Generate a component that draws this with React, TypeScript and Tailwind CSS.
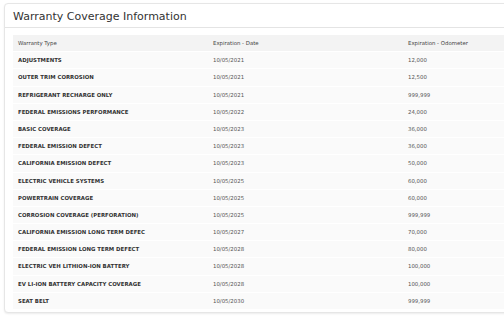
import React from 'react';

const rows: [string, string, string][] = [
  ['ADJUSTMENTS', '10/05/2021', '12,000'],
  ['OUTER TRIM CORROSION', '10/05/2021', '12,500'],
  ['REFRIGERANT RECHARGE ONLY', '10/05/2021', '999,999'],
  ['FEDERAL EMISSIONS PERFORMANCE', '10/05/2022', '24,000'],
  ['BASIC COVERAGE', '10/05/2023', '36,000'],
  ['FEDERAL EMISSION DEFECT', '10/05/2023', '36,000'],
  ['CALIFORNIA EMISSION DEFECT', '10/05/2023', '50,000'],
  ['ELECTRIC VEHICLE SYSTEMS', '10/05/2025', '60,000'],
  ['POWERTRAIN COVERAGE', '10/05/2025', '60,000'],
  ['CORROSION COVERAGE (PERFORATION)', '10/05/2025', '999,999'],
  ['CALIFORNIA EMISSION LONG TERM DEFEC', '10/05/2027', '70,000'],
  ['FEDERAL EMISSION LONG TERM DEFECT', '10/05/2028', '80,000'],
  ['ELECTRIC VEH LITHION-ION BATTERY', '10/05/2028', '100,000'],
  ['EV LI-ION BATTERY CAPACITY COVERAGE', '10/05/2028', '100,000'],
  ['SEAT BELT', '10/05/2030', '999,999'],
];

const App: React.FC = () => {
  return (
    <div className="w-[504px] h-[321px] overflow-hidden bg-white pt-[3px] pl-[4px] font-['DejaVu_Sans',sans-serif]">
      <div className="w-[600px] h-[310px] rounded-[4px] border border-[#e6e6e6] shadow-[0_1px_2px_rgba(0,0,0,0.08)] bg-white">
        {/* Header */}
        <div className="h-[24px] border-b border-[#e4e4e4] pl-[8px] flex items-center">
          <h2 className="text-[11px] leading-none text-[#333] pt-[1px]">Warranty Coverage Information</h2>
        </div>

        {/* Table */}
        <div className="pl-[8px] pt-[7px]">
          <div className="flex items-center h-[17.2px] bg-[#f3f3f3] border-b border-white text-[5.4px] text-[#444]">
            <div className="w-[195px] pl-[5px]">Warranty Type</div>
            <div className="w-[195px] pl-[5px]">Expiration - Date</div>
            <div className="pl-[5px]">Expiration - Odometer</div>
          </div>
          {rows.map(([type, date, odo]) => (
            <div key={type} className="flex items-center h-[17.2px] bg-[#fafafa] border-b border-white text-[5.4px]">
              <div className="w-[195px] pl-[5px] font-bold text-[#333]">{type}</div>
              <div className="w-[195px] pl-[5px] text-[#555]">{date}</div>
              <div className="pl-[5px] text-[#555]">{odo}</div>
            </div>
          ))}
        </div>
      </div>
    </div>
  );
};

export default App;
